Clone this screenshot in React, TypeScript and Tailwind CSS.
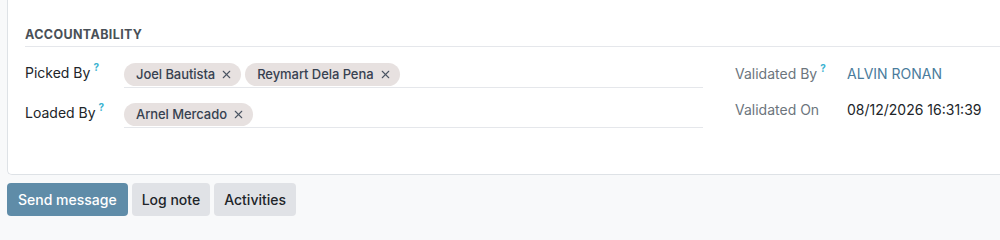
import { X } from 'lucide-react'

const PICKED = ['Joel Bautista', 'Reymart Dela Pena']
const LOADED = ['Arnel Mercado']

function Help() {
  return <sup className="ml-[3px] -top-[7px] text-[10px] font-bold text-[#3bb3d1]">?</sup>
}

function Chip({ name }: { name: string }) {
  return (
    <span className="inline-flex items-center gap-[5px] h-[23px] pl-[12px] pr-[8px] rounded-full bg-[#e7e1e0] text-[13px] font-medium text-[#374151] tracking-[-0.005em]">
      {name}
      <X size={13} strokeWidth={2} className="text-[#4b5563]" />
    </span>
  )
}

function ManyRow({ label, names }: { label: string; names: string[] }) {
  return (
    <div className="flex h-[40px] items-start">
      <div className="w-[99px] pt-[16px] text-[14px] text-[#212529] leading-[18px]">
        {label}
        <Help />
      </div>
      <div className="flex-1 h-[40px] flex items-start gap-[4px] pt-[15px] border-b border-[#e5e7eb]">
        {names.map((n) => (
          <Chip key={n} name={n} />
        ))}
      </div>
    </div>
  )
}

export default function App() {
  return (
    <div className="w-[1000px] h-[240px] overflow-hidden bg-[#f8f9fa] font-['Inter',sans-serif]">
      {/* Sheet */}
      <div className="ml-[7px] h-[175px] bg-white border-l border-b border-[#dee2e6] rounded-bl-[5px] pl-[17px] pt-[28px]">
        <div className="h-[19px] border-b border-[#e5e7eb] text-[12.5px] font-bold tracking-[0.03em] text-[#495057] leading-[13px]">
          ACCOUNTABILITY
        </div>

        <div className="flex mt-[1px]">
          <div className="w-[678px]">
            <ManyRow label="Picked By" names={PICKED} />
            <ManyRow label="Loaded By" names={LOADED} />
          </div>

          <div className="ml-[32px] pt-[17px] text-[14px] leading-[18px] flex flex-col gap-[18px]">
            <div className="flex">
              <span className="w-[112px] text-[#6c757d]">
                Validated By
                <Help />
              </span>
              <span className="text-[#4a7c9c]">ALVIN RONAN</span>
            </div>
            <div className="flex">
              <span className="w-[112px] text-[#6c757d]">Validated On</span>
              <span className="text-[#212529]">08/12/2026 16:31:39</span>
            </div>
          </div>
        </div>
      </div>

      {/* Chatter buttons */}
      <div className="flex gap-[4px] ml-[7px] mt-[8px]">
        <button className="h-[33px] px-[11px] rounded-[4px] bg-[#5f8ca8] text-white text-[14px] font-medium">
          Send message
        </button>
        <button className="h-[33px] px-[10px] rounded-[4px] bg-[#e0e2e6] text-[#212529] text-[14px] font-medium">
          Log note
        </button>
        <button className="h-[33px] px-[10px] rounded-[4px] bg-[#e0e2e6] text-[#212529] text-[14px] font-medium">
          Activities
        </button>
      </div>
    </div>
  )
}
